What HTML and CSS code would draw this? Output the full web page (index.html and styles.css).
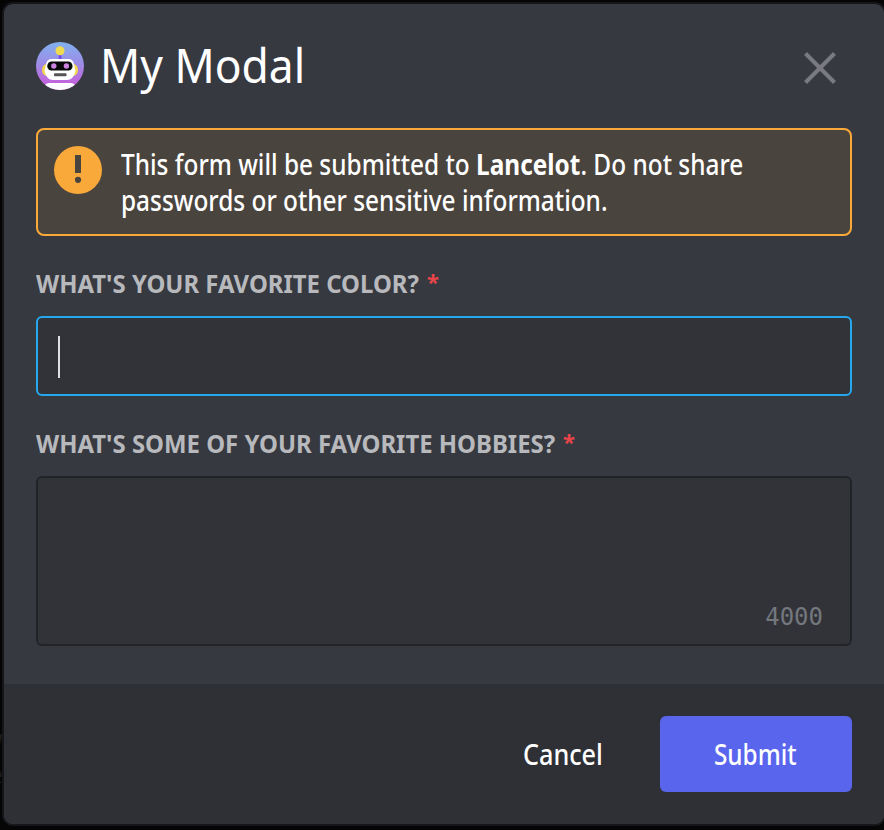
FILE: index.html
```
<!DOCTYPE html>
<html lang="en">
<head>
<meta charset="utf-8">
<title>My Modal</title>
<link rel="stylesheet" href="styles.css">
</head>
<body>
<div class="backdrop" aria-hidden="true"><span class="peek peek-w">w</span><span class="peek peek-e">e</span></div>
<form class="modal">
  <header class="header">
    <svg class="avatar" viewBox="0 0 48 48">
      <defs>
        <linearGradient id="sky" x1="0" y1="0" x2="0" y2="1"><stop offset="0" stop-color="#80b0ee"/><stop offset=".5" stop-color="#a188e6"/><stop offset="1" stop-color="#d055dc"/></linearGradient>
        <clipPath id="round"><circle cx="24" cy="24" r="24"/></clipPath>
      </defs>
      <g clip-path="url(#round)">
        <path fill="url(#sky)" d="M0 0h48v48H0z"/>
        <path fill="#704aeb" d="M22.7 12h2.8v6h-2.8z"/>
        <circle cx="24" cy="8.8" r="4.5" fill="#f0db50"/>
        <ellipse cx="10" cy="28" rx="4" ry="5.8" fill="#f3d64d"/>
        <ellipse cx="38" cy="28" rx="4" ry="5.8" fill="#f3d64d"/>
        <path fill="#fff" d="M16 17h16q5 0 6 5l1.500 7q-2 9-8.500 9H17q-6.500 0-8.500-9l1.500-7q1-5 6-5z"/>
        <rect x="11.3" y="19.500" width="25.2" height="9" rx="4.300" fill="#080808"/>
        <circle cx="17.800" cy="24" r="2.700" fill="#cc83df"/>
        <circle cx="30.400" cy="24" r="2.700" fill="#cc83df"/>
        <rect x="18" y="31.200" width="12.500" height="3" rx="1" fill="#555"/>
        <path fill="#fff" d="M8 48v-3q1-4 6-4h20q5 0 6 4v3z"/>
      </g>
    </svg>
    <h1 class="title"><span>My Modal</span></h1>
    <svg class="close" viewBox="0 0 32 32"><path d="M1.500 1.500l29 29M30.500 1.500l-29 29"/></svg>
  </header>
  <div class="warning">
    <svg class="alert" viewBox="0 0 48 48"><circle cx="24" cy="24" r="24" fill="#f9a93a"/><path fill="#4a443e" d="M21 9h6v18h-6z"/><circle cx="24" cy="33.800" r="3.100" fill="#4a443e"/></svg>
    <p class="message"><span class="line">This form will be submitted to <b>Lancelot</b>. Do not share</span><span class="line">passwords or other sensitive information.</span></p>
  </div>
  <div class="label"><span class="label-color">WHAT'S YOUR FAVORITE COLOR?</span><i class="star">*</i></div>
  <div class="field focused"><div class="caret"></div></div>
  <div class="label"><span class="label-hobby">WHAT'S SOME OF YOUR FAVORITE HOBBIES?</span><i class="star">*</i></div>
  <div class="field area"><span class="count">4000</span></div>
  <footer class="footer">
    <div class="cancel"><span>Cancel</span></div>
    <div class="submit"><span>Submit</span></div>
  </footer>
</form>
</body>
</html>
```
FILE: styles.css
```
* { box-sizing: border-box; }
body {
  margin: 0;
  height: 830px;
  padding-top: 4px;
  padding-left: 4px;
  overflow: hidden;
  background: #050505;
  color: #fff;
  font-family: "Noto Sans", "Open Sans", sans-serif;
}
.backdrop { position: absolute; left: 0; top: 0; width: 4px; height: 830px; overflow: hidden; color: #1a1b1e; font-size: 28px; line-height: 36px; }
.peek { position: absolute; right: 1px; }
.peek-w { top: 720px; }
.peek-e { top: 755px; }
.modal {
  position: relative;
  display: flex;
  flex-direction: column;
  width: 880px;
  height: 820px;
  border-radius: 9px;
  overflow: hidden;
  background: #373941;
  box-shadow: 0 0 0 2px #151619;
}
.header { display: flex; align-items: center; height: 124px; padding: 0 48px 0 32px; }
.avatar { width: 48px; height: 48px; }
.title { flex: 1; margin: -2px 0 0 16px; font-size: 47px; line-height: 60px; font-weight: 400; }
.title span, .line, .label span, .cancel span, .submit span { display: block; width: max-content; white-space: nowrap; transform-origin: 0 50%; }
.title span { transform: scaleX(.944); }
.close { width: 32px; height: 32px; margin-top: 4px; stroke: #797a80; stroke-width: 4; }
.warning {
  display: flex;
  flex: none;
  height: 108px;
  margin: 0 32px;
  padding: 16px;
  border: 2px solid #f9a93a;
  border-radius: 8px;
  background: #4a443e;
}
.alert { flex: none; width: 48px; height: 48px; }
.message { margin: 0 0 0 19px; font-size: 28px; line-height: 36px; font-weight: 500; }
.message b { font-weight: 700; }
.line { transform: scaleX(.871); }
.label { display: flex; height: 32px; margin: 32px 32px 0; color: #b8b9bd; font-size: 25px; line-height: 30px; font-weight: 700; }
.label span { transform: scaleX(.957); }
.label .label-color { width: 384px; }
.label .label-hobby { width: 520px; }
.star { margin-left: 7px; color: #ea4548; font-style: normal; font-size: 22px; line-height: 27px; }
.field { flex: none; height: 80px; margin: 16px 32px 0; border: 2px solid #232428; border-radius: 6px; background: #323338; }
.focused { padding: 18px 20px; border-color: #25a9ec; }
.caret { width: 2px; height: 42px; background: #dfe0e2; }
.area { display: flex; align-items: flex-end; justify-content: flex-end; height: 170px; padding: 0 27px 13px 0; }
.count { color: #73777e; font: 24px/28px "DejaVu Sans Mono", monospace; }
.footer { display: flex; flex: none; align-items: center; justify-content: flex-end; height: 140px; margin-top: auto; padding: 0 32px; background: #2f3035; font-size: 28px; line-height: 36px; font-weight: 500; }
.cancel { width: 137px; }
.cancel span { transform: scaleX(.9); }
.submit { width: 192px; height: 76px; padding: 20px 0 0 54px; border-radius: 6px; background: #5a65ee; }
.submit span { transform: scaleX(.868); }
```
